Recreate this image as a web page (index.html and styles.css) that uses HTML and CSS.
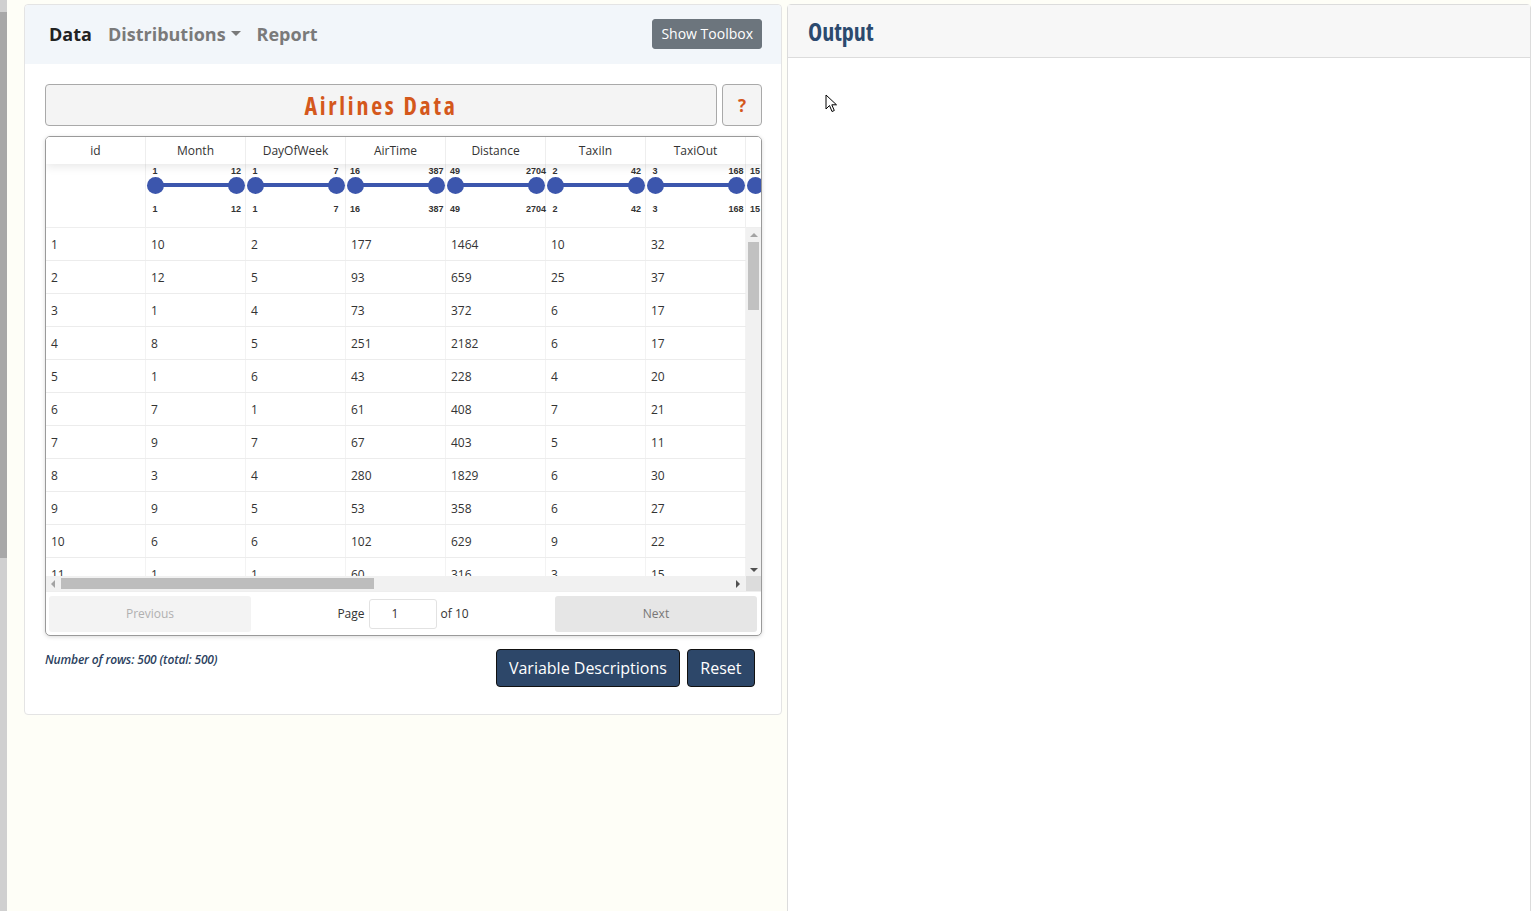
FILE: index.html
```html
<!DOCTYPE html>
<html>
<head>
<meta charset="utf-8">
<link rel="stylesheet" href="styles.css">
</head>
<body>
<div class="strip"><div class="strip-thumb"></div></div>
<div class="main">
  <section class="panel left">
    <nav class="navbar">
      <div class="nav-links">
        <span class="nav-item active">Data</span>
        <span class="nav-item">Distributions<span class="caret"></span></span>
        <span class="nav-item">Report</span>
      </div>
      <button class="btn-toolbox">Show Toolbox</button>
    </nav>
    <div class="panel-body">
      <div class="title-row">
        <div class="title-box">Airlines Data</div>
        <div class="help-box">?</div>
      </div>
      <div class="table-wrap">
        <div class="thead">
          <div class="hrow">
            <div class="hcell">id</div>
            <div class="hcell">Month</div>
            <div class="hcell">DayOfWeek</div>
            <div class="hcell">AirTime</div>
            <div class="hcell">Distance</div>
            <div class="hcell">TaxiIn</div>
            <div class="hcell">TaxiOut</div>
            <div class="hcell"></div>
          </div>
          <div class="frow">
            <div class="fcell"></div>
            <div class="fcell"><div class="slider"><span class="lab top l">1</span><span class="lab top r">12</span><div class="track"></div><span class="handle l"></span><span class="handle r"></span><span class="lab bot l">1</span><span class="lab bot r">12</span></div></div>
            <div class="fcell"><div class="slider"><span class="lab top l">1</span><span class="lab top r">7</span><div class="track"></div><span class="handle l"></span><span class="handle r"></span><span class="lab bot l">1</span><span class="lab bot r">7</span></div></div>
            <div class="fcell"><div class="slider"><span class="lab top l">16</span><span class="lab top r">387</span><div class="track"></div><span class="handle l"></span><span class="handle r"></span><span class="lab bot l">16</span><span class="lab bot r">387</span></div></div>
            <div class="fcell"><div class="slider"><span class="lab top l">49</span><span class="lab top r">2704</span><div class="track"></div><span class="handle l"></span><span class="handle r"></span><span class="lab bot l">49</span><span class="lab bot r">2704</span></div></div>
            <div class="fcell"><div class="slider"><span class="lab top l">2</span><span class="lab top r">42</span><div class="track"></div><span class="handle l"></span><span class="handle r"></span><span class="lab bot l">2</span><span class="lab bot r">42</span></div></div>
            <div class="fcell"><div class="slider"><span class="lab top l">3</span><span class="lab top r">168</span><div class="track"></div><span class="handle l"></span><span class="handle r"></span><span class="lab bot l">3</span><span class="lab bot r">168</span></div></div>
            <div class="fcell"><div class="slider"><span class="lab top l">15</span><div class="track"></div><span class="handle l"></span><span class="lab bot l">15</span></div></div>
          </div>
        </div>
        <div class="tbody">
          <div class="viewport">
            <div class="row"><div class="cell">1</div><div class="cell">10</div><div class="cell">2</div><div class="cell">177</div><div class="cell">1464</div><div class="cell">10</div><div class="cell">32</div></div>
            <div class="row"><div class="cell">2</div><div class="cell">12</div><div class="cell">5</div><div class="cell">93</div><div class="cell">659</div><div class="cell">25</div><div class="cell">37</div></div>
            <div class="row"><div class="cell">3</div><div class="cell">1</div><div class="cell">4</div><div class="cell">73</div><div class="cell">372</div><div class="cell">6</div><div class="cell">17</div></div>
            <div class="row"><div class="cell">4</div><div class="cell">8</div><div class="cell">5</div><div class="cell">251</div><div class="cell">2182</div><div class="cell">6</div><div class="cell">17</div></div>
            <div class="row"><div class="cell">5</div><div class="cell">1</div><div class="cell">6</div><div class="cell">43</div><div class="cell">228</div><div class="cell">4</div><div class="cell">20</div></div>
            <div class="row"><div class="cell">6</div><div class="cell">7</div><div class="cell">1</div><div class="cell">61</div><div class="cell">408</div><div class="cell">7</div><div class="cell">21</div></div>
            <div class="row"><div class="cell">7</div><div class="cell">9</div><div class="cell">7</div><div class="cell">67</div><div class="cell">403</div><div class="cell">5</div><div class="cell">11</div></div>
            <div class="row"><div class="cell">8</div><div class="cell">3</div><div class="cell">4</div><div class="cell">280</div><div class="cell">1829</div><div class="cell">6</div><div class="cell">30</div></div>
            <div class="row"><div class="cell">9</div><div class="cell">9</div><div class="cell">5</div><div class="cell">53</div><div class="cell">358</div><div class="cell">6</div><div class="cell">27</div></div>
            <div class="row"><div class="cell">10</div><div class="cell">6</div><div class="cell">6</div><div class="cell">102</div><div class="cell">629</div><div class="cell">9</div><div class="cell">22</div></div>
            <div class="row"><div class="cell">11</div><div class="cell">1</div><div class="cell">1</div><div class="cell">60</div><div class="cell">316</div><div class="cell">3</div><div class="cell">15</div></div>
          </div>
          <div class="vscroll">
            <span class="arr up"></span>
            <span class="vthumb"></span>
            <span class="vfill"></span>
            <span class="arr down"></span>
          </div>
          <div class="hscroll">
            <span class="arr left"></span>
            <span class="hthumb"></span>
            <span class="hfill"></span>
            <span class="arr right"></span>
          </div>
          <div class="corner"></div>
        </div>
        <div class="pager">
          <button class="pbtn prev">Previous</button>
          <div class="pinfo"><span>Page</span><span class="pinput">1</span><span>of 10</span></div>
          <button class="pbtn next">Next</button>
        </div>
      </div>
      <div class="footer">
        <span class="count">Number of rows: 500 (total: 500)</span>
        <div class="actions">
          <button class="btn-navy">Variable Descriptions</button>
          <button class="btn-navy reset">Reset</button>
        </div>
      </div>
    </div>
  </section>
  <section class="panel right">
    <div class="out-head">Output</div>
    <div class="out-body"></div>
  </section>
</div>
<svg class="cursor" width="14" height="20" viewBox="0 0 14 20"><path d="M1 1 L1 15 L4.5 11.5 L7 17.5 L9.3 16.5 L6.8 10.8 L11.5 10.8 Z" fill="#fff" stroke="#000" stroke-width="1"/></svg>
</body>
</html>
```
FILE: styles.css
```css
* { box-sizing: border-box; }
html, body { margin: 0; padding: 0; height: 100%; }
body {
  display: flex;
  background: #fefef7;
  font-family: "Open Sans", "Noto Sans", sans-serif;
  color: #333;
  overflow: hidden;
}
.strip {
  width: 7px;
  height: 911px;
  background: #d0d0d0;
  padding-top: 12px;
  flex: none;
}
.strip-thumb { height: 546px; background: #a8a8a8; }
.main {
  display: flex;
  align-items: flex-start;
  gap: 5px;
  padding: 4px 0 0 17px;
  flex: 1;
}
.panel {
  background: #fff;
  border: 1px solid #e4e4e4;
  border-radius: 4px;
}
.panel.left { width: 758px; height: 711px; }
.panel.right { width: 744px; height: 920px; border-color: #dcdcdc; border-radius: 4px 4px 0 0; }

.navbar {
  height: 59px;
  background: #f2f6fa;
  display: flex;
  align-items: center;
  justify-content: space-between;
  padding: 0 19px 2px 24px;
  border-radius: 4px 4px 0 0;
}
.nav-links { display: flex; gap: 16px; align-items: center; }
.nav-item { font-size: 18px; font-weight: 700; color: #7a7a7a; display: flex; align-items: center; }
.nav-item.active { color: #222; }
.caret {
  display: inline-block;
  margin-left: 5px;
  border-left: 5px solid transparent;
  border-right: 5px solid transparent;
  border-top: 5px solid #7a7a7a;
}
.btn-toolbox {
  font-family: "Open Sans", sans-serif;
  font-size: 14px;
  color: #fff;
  background: #6c757d;
  border: 1px solid #6c757d;
  border-radius: 3px;
  height: 30px;
  padding: 0 8px;
}
.panel-body { padding: 20px 19px 0 20px; }
.title-row { display: flex; gap: 5px; height: 42px; }
.title-box, .help-box {
  background: #f4f4f4;
  border: 1px solid #a9a9a9;
  border-radius: 4px;
  display: flex;
  align-items: center;
  justify-content: center;
  color: #d4581c;
  font-weight: 700;
}
.title-box {
  flex: 1;
  font-size: 24px;
  font-stretch: 75%;
  letter-spacing: 2.7px;
  padding-top: 1px;
}
.help-box { width: 40px; font-size: 17px; }

.table-wrap {
  margin-top: 10px;
  width: 717px;
  border: 1px solid #9a9a9a;
  border-radius: 5px;
  overflow: hidden;
  box-shadow: 0 1px 4px rgba(0,0,0,0.15);
  background: #fff;
}
.thead { overflow: hidden; }
.hrow, .frow { display: flex; width: 800px; }
.hrow { position: relative; z-index: 1; box-shadow: 0 3px 10px rgba(0,0,0,0.09); background: #fff; }
.hcell {
  flex: none;
  width: 100px;
  height: 27px;
  line-height: 27px;
  text-align: center;
  font-size: 12px;
  color: #333;
  border-right: 1px solid #eee;
}
.fcell {
  flex: none;
  width: 100px;
  height: 64px;
  border-right: 1px solid #f0f0f0;
  border-bottom: 1px solid #eee;
}
.slider { position: relative; height: 100%; }
.track {
  position: absolute;
  left: 9px; right: 10px;
  top: 19px;
  height: 4px;
  background: #3c56ad;
}
.handle {
  position: absolute;
  width: 17px; height: 17px;
  border-radius: 50%;
  background: #3c56ad;
  top: 12.5px;
}
.handle.l { left: 0.5px; }
.handle.r { left: 81.5px; }
.lab {
  position: absolute;
  font-family: "Liberation Sans", Arial, sans-serif;
  font-size: 9px;
  font-weight: 700;
  color: #333;
  line-height: 10px;
  transform: translateX(-50%);
}
.lab.top { top: 2px; }
.lab.bot { top: 40px; }
.lab.l { left: 9px; }
.lab.r { left: 90px; }

.tbody {
  display: grid;
  grid-template-columns: 700px 15px;
  grid-template-rows: 348px 15px;
}
.viewport { overflow: hidden; }
.row { display: flex; height: 33px; border-bottom: 1px solid #ececec; }
.cell {
  flex: none;
  width: 100px;
  line-height: 32px;
  padding: 1px 0 0 5px;
  font-size: 12px;
  color: #333;
  border-right: 1px solid #f3f3f3;
}
.vscroll {
  background: #f1f1f1;
  display: flex;
  flex-direction: column;
  align-items: center;
  padding: 5px 0 4px;
}
.vthumb { width: 11px; height: 68px; background: #c1c1c1; margin-top: 5px; }
.vfill { flex: 1; }
.hscroll {
  background: #f1f1f1;
  display: flex;
  align-items: center;
  padding: 0 6px 0 5px;
}
.hthumb { height: 11px; width: 313px; background: #bdbdbd; margin-left: 6px; }
.hfill { flex: 1; }
.corner { background: #dcdcdc; }
.arr { width: 0; height: 0; flex: none; }
.arr.up { border-left: 4px solid transparent; border-right: 4px solid transparent; border-bottom: 4px solid #a3a3a3; }
.arr.down { border-left: 4px solid transparent; border-right: 4px solid transparent; border-top: 4px solid #505050; }
.arr.left { border-top: 4px solid transparent; border-bottom: 4px solid transparent; border-right: 4px solid #a3a3a3; }
.arr.right { border-top: 4px solid transparent; border-bottom: 4px solid transparent; border-left: 4px solid #505050; }

.pager {
  display: flex;
  align-items: center;
  justify-content: space-between;
  padding: 4px 4px 4px 3px;
  border-top: 1px solid #eee;
  height: 44px;
}
.pbtn {
  width: 202px;
  height: 36px;
  border: none;
  border-radius: 3px;
  font-family: "Open Sans", sans-serif;
  font-size: 12px;
}
.pbtn.prev { background: #f3f3f3; color: #b0b0b0; }
.pbtn.next { background: #e6e6e6; color: #777; }
.pinfo { display: flex; align-items: center; gap: 4px; font-size: 12px; color: #333; }
.pinput {
  width: 68px;
  height: 30px;
  border: 1px solid #e2e2e2;
  border-radius: 3px;
  line-height: 28px;
  padding-left: 22px;
}

.footer {
  display: flex;
  justify-content: space-between;
  align-items: flex-start;
  margin-top: 13px;
  padding-right: 7px;
}
.count {
  font-size: 12px;
  font-style: italic;
  font-weight: 600;
  letter-spacing: -0.15px;
  color: #2c3f60;
  margin-top: 2px;
}
.actions { display: flex; gap: 7px; }
.btn-navy {
  font-family: "Open Sans", sans-serif;
  font-size: 16px;
  color: #fff;
  background: #2d4769;
  border: 1px solid #111;
  border-radius: 4px;
  height: 38px;
  padding: 0 12px;
}
.btn-navy.reset { padding: 0 12.5px; }

.out-head {
  height: 53px;
  background: #f7f7f7;
  border-bottom: 1px solid #dcdcdc;
  padding-left: 20px;
  display: flex;
  align-items: center;
  font-size: 24px;
  font-weight: 700;
  font-stretch: 75%;
  color: #2c4a6e;
  padding-top: 1px;
}
.cursor { position: absolute; left: 825px; top: 94px; }
```
